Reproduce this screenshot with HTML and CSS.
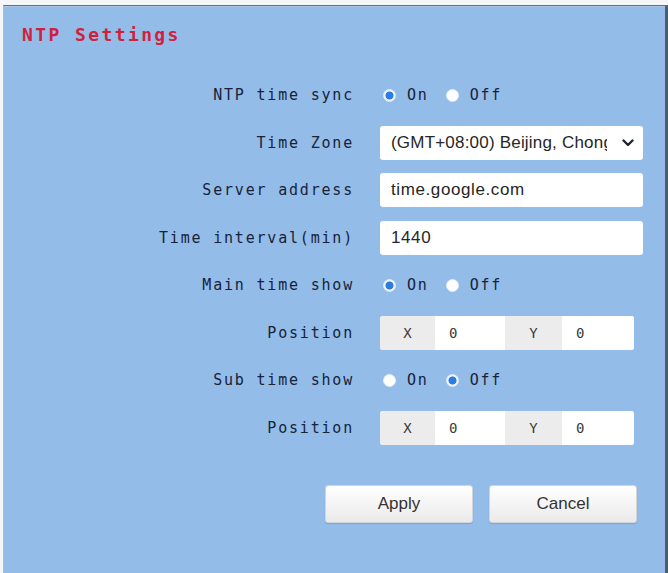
FILE: index.html
```html
<!DOCTYPE html>
<html lang="en">
<head>
<meta charset="utf-8">
<title>NTP Settings</title>
<link rel="stylesheet" href="styles.css">
</head>
<body>
<div class="frame">
  <h1 class="title">NTP Settings</h1>
  <form class="form">
    <div class="lbl">NTP time sync</div>
    <div class="radios">
      <label class="radio"><input type="radio" name="sync" checked><span>On</span></label>
      <label class="radio"><input type="radio" name="sync"><span>Off</span></label>
    </div>

    <div class="lbl">Time Zone</div>
    <div class="select-wrap">
      <select class="field select">
        <option>(GMT+08:00) Beijing, Chongqing, Hong Kong</option>
      </select>
      <svg class="chevron" width="12" height="8" viewBox="0 0 12 8"><path d="M1.5 1.5 6 6 10.5 1.5" fill="none" stroke="#1d2530" stroke-width="2.4" stroke-linecap="round" stroke-linejoin="round"/></svg>
    </div>

    <div class="lbl">Server address</div>
    <input class="field" type="text" value="time.google.com">

    <div class="lbl">Time interval(min)</div>
    <input class="field" type="text" value="1440">

    <div class="lbl">Main time show</div>
    <div class="radios">
      <label class="radio"><input type="radio" name="main" checked><span>On</span></label>
      <label class="radio"><input type="radio" name="main"><span>Off</span></label>
    </div>

    <div class="lbl">Position</div>
    <div class="pos">
      <span class="axis axis-x">X</span>
      <input class="coord coord-x" type="text" value="0">
      <span class="axis axis-y">Y</span>
      <input class="coord coord-y" type="text" value="0">
    </div>

    <div class="lbl">Sub time show</div>
    <div class="radios">
      <label class="radio"><input type="radio" name="sub"><span>On</span></label>
      <label class="radio"><input type="radio" name="sub" checked><span>Off</span></label>
    </div>

    <div class="lbl">Position</div>
    <div class="pos">
      <span class="axis axis-x">X</span>
      <input class="coord coord-x" type="text" value="0">
      <span class="axis axis-y">Y</span>
      <input class="coord coord-y" type="text" value="0">
    </div>
  </form>
  <div class="actions">
    <button class="btn" type="button">Apply</button>
    <button class="btn" type="button">Cancel</button>
  </div>
</div>
</body>
</html>
```
FILE: styles.css
```css
* { box-sizing: border-box; }

html, body {
  margin: 0;
  padding: 0;
  background: #f4f6f8;
}

.frame {
  margin: 5px 0 0 3px;
  height: 568px;
  background: #93bde8;
  border-top: 1px solid #66707c;
  border-left: 1px solid #a7bdd3;
  border-right: 3px solid #4f5c6b;
  box-shadow: inset 0 1px 0 #a9c7e6;
  overflow: hidden;
}

.title {
  margin: 19px 0 0 18px;
  font-family: "DejaVu Sans Mono", "Liberation Mono", monospace;
  font-size: 18px;
  line-height: 20px;
  letter-spacing: 2.4px;
  font-weight: bold;
  color: #d0213c;
}

.form {
  display: grid;
  grid-template-columns: 350px 263px;
  grid-auto-rows: 34px;
  column-gap: 26px;
  row-gap: 13.5px;
  margin-top: 33px;
  align-items: center;
}

.lbl {
  text-align: right;
  font-family: "DejaVu Sans Mono", "Liberation Mono", monospace;
  font-size: 15px;
  letter-spacing: 1.8px;
  color: #18223a;
  white-space: nowrap;
}

.radios {
  display: flex;
  align-items: center;
  gap: 17px;
  padding-left: 3px;
}

.radio {
  display: flex;
  align-items: center;
  gap: 11px;
  font-family: "DejaVu Sans Mono", "Liberation Mono", monospace;
  font-size: 15px;
  letter-spacing: 1.8px;
  color: #18223a;
}

.radio input {
  appearance: none;
  -webkit-appearance: none;
  margin: 0;
  width: 13px;
  height: 13px;
  border-radius: 50%;
  background: #ffffff;
  border: 1px solid #e2ecf6;
}

.radio input:checked {
  background: radial-gradient(circle, #2b7de0 0 3.6px, #eef4fb 4.4px);
}

.field {
  width: 263px;
  height: 34px;
  border: none;
  border-radius: 3px;
  background: #ffffff;
  padding: 0 11px;
  font-family: "Liberation Sans", Arial, sans-serif;
  font-size: 17px;
  letter-spacing: 0.6px;
  color: #262626;
  outline: none;
}

.select-wrap {
  position: relative;
  width: 263px;
  height: 34px;
}

.select {
  appearance: none;
  -webkit-appearance: none;
  padding-right: 36px;
  letter-spacing: 0.2px;
}

.chevron {
  position: absolute;
  right: 9px;
  top: 13px;
  pointer-events: none;
}

.pos {
  display: flex;
  width: 254px;
  height: 34px;
  border-radius: 3px;
  overflow: hidden;
  background: #ffffff;
}

.axis {
  display: flex;
  align-items: center;
  justify-content: center;
  background: #ececec;
  font-family: "DejaVu Sans Mono", "Liberation Mono", monospace;
  font-size: 14px;
  color: #3a3a3a;
}

.axis-x { width: 55px; }
.axis-y { width: 57px; }

.coord {
  border: none;
  outline: none;
  background: #ffffff;
  padding: 0 0 0 14px;
  height: 34px;
  font-family: "DejaVu Sans Mono", "Liberation Mono", monospace;
  font-size: 14px;
  color: #3a3a3a;
}

.coord-x { width: 70px; }
.coord-y { width: 72px; }

.actions {
  display: flex;
  gap: 16px;
  margin-top: 40px;
  padding-left: 321px;
}

.btn {
  width: 148px;
  height: 38px;
  border: 1px solid #d2d6da;
  border-radius: 3px;
  background: linear-gradient(#ffffff, #eaeaea);
  font-family: "Liberation Sans", Arial, sans-serif;
  font-size: 17px;
  color: #333333;
  box-shadow: 0 1px 1px rgba(60, 90, 130, 0.25);
}
```
